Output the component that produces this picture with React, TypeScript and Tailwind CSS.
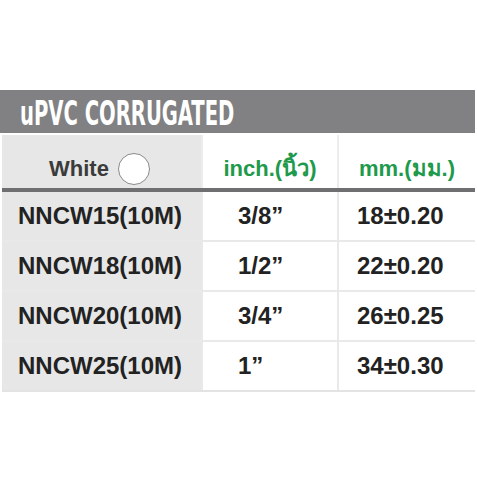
import React from "react";

type Row = { code: string; inch: string; mm: string };

const rows: Row[] = [
  { code: "NNCW15(10M)", inch: "3/8”", mm: "18±0.20" },
  { code: "NNCW18(10M)", inch: "1/2”", mm: "22±0.20" },
  { code: "NNCW20(10M)", inch: "3/4”", mm: "26±0.25" },
  { code: "NNCW25(10M)", inch: "1”", mm: "34±0.30" },
];

export default function App() {
  return (
    <div className="w-[477px] h-[477px] bg-white pt-[90px] font-['Liberation_Sans','Noto_Sans',sans-serif]">
      <div className="w-[475px] h-[43px] bg-[#818184] flex items-center pl-[20px] pt-[3px] overflow-hidden">
        <span className="inline-block origin-left scale-x-[0.66] text-white text-[33px] font-bold leading-none font-['DejaVu_Sans_Condensed','DejaVu_Sans',sans-serif] whitespace-nowrap">
          uPVC CORRUGATED
        </span>
      </div>

      <div className="ml-[2px] w-[473px] mt-[2px] grid grid-cols-[199px_134px_136px] gap-x-[2px] bg-[#ececec]">
        {/* header row */}
        <div className="h-[53px] bg-[#e7e7e7] flex items-center pl-[47px] pt-[14px] gap-[9px]">
          <span className="text-[22px] text-[#3b3b3b] font-bold leading-none">White</span>
          <span className="w-[32px] h-[32px] rounded-full bg-white border border-[#8a8a8a]" />
        </div>
        <div className="h-[53px] bg-white flex items-center justify-center pt-[14px]">
          <span className="text-[22px] text-[#1e9a4c] font-bold leading-none">inch.(นิ้ว)</span>
        </div>
        <div className="h-[53px] bg-white flex items-center justify-center pt-[14px]">
          <span className="text-[22px] text-[#1e9a4c] font-bold leading-none">mm.(มม.)</span>
        </div>
      </div>

      <div className="ml-[2px] w-[473px] h-[4px] bg-[#6f6f72]" />

      <div className="ml-[2px] w-[473px] grid grid-cols-[199px_134px_136px] gap-x-[2px] gap-y-[2px] bg-[#e9e9e9] border-b-2 border-[#e3e3e3]">
        {rows.map((r) => (
          <React.Fragment key={r.code}>
            <div className="h-[48px] bg-[#e7e7e7] flex items-center pl-[16px]">
              <span className="text-[24px] text-[#222] font-bold leading-none">{r.code}</span>
            </div>
            <div className="h-[48px] bg-white flex items-center pl-[35px]">
              <span className="text-[24px] text-[#222] font-bold leading-none">{r.inch}</span>
            </div>
            <div className="h-[48px] bg-white flex items-center pl-[18px]">
              <span className="text-[24px] text-[#222] font-bold leading-none">{r.mm}</span>
            </div>
          </React.Fragment>
        ))}
      </div>
    </div>
  );
}
